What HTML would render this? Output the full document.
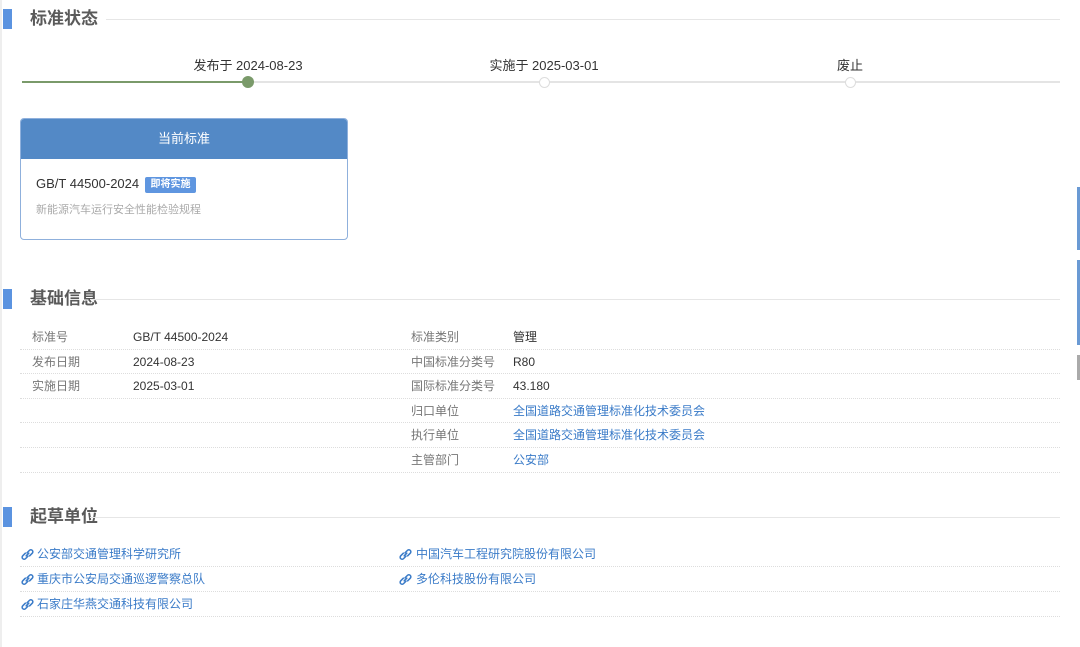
<!DOCTYPE html>
<html><head><meta charset="utf-8"><style>
*{margin:0;padding:0;box-sizing:border-box}
body{width:1080px;height:647px;background:#fff;position:relative;overflow:hidden;font-family:"Liberation Sans","Noto Sans CJK SC",sans-serif;color:#333}
.a{position:absolute;white-space:nowrap}
.bar{position:absolute;left:3px;width:9px;height:20px;background:#5b93e0}
.ttl{position:absolute;left:30px;font-size:17px;font-weight:bold;color:#5a5a5a;line-height:20px}
.hl{position:absolute;height:1px;background:#e6e6e6;right:20px}
.row{position:absolute;left:20px;width:1040px;height:24.6px;border-bottom:1px dotted #ddd;font-size:12px;line-height:24px}
.row span{position:absolute;top:0}
.lb{color:#777}
.lk{color:#3a7bc8}
.dr{position:absolute;left:20px;width:1040px;height:25px;border-bottom:1px dotted #ddd;font-size:12px;line-height:25px;color:#3a7bc8}
.dr span{position:absolute;top:0}
svg.ic{position:absolute;top:6px;width:13px;height:13px}
</style></head><body>
<div class="a" style="left:0;top:0;width:2px;height:647px;background:#eee"></div>
<div class="a" style="left:1077px;top:187px;width:3px;height:63px;background:#6a9ad4"></div>
<div class="a" style="left:1077px;top:260px;width:3px;height:85px;background:#6a9ad4"></div>
<div class="a" style="left:1077px;top:355px;width:3px;height:25px;background:#aaa"></div>

<div class="bar" style="top:9px"></div>
<div class="ttl" style="top:9px">标准状态</div>
<div class="hl" style="left:106px;top:19px"></div>

<div class="a" style="left:22px;top:81px;width:1038px;height:2px;background:#e4e4e4"></div>
<div class="a" style="left:22px;top:81px;width:226px;height:2px;background:#7a9a6a"></div>
<div class="a" style="left:242px;top:76px;width:12px;height:12px;border-radius:50%;background:#7a9a6a"></div>
<div class="a" style="left:539px;top:77px;width:11px;height:11px;border-radius:50%;background:#fff;border:1.5px solid #ddd"></div>
<div class="a" style="left:845px;top:77px;width:11px;height:11px;border-radius:50%;background:#fff;border:1.5px solid #ddd"></div>
<div class="a" style="left:248px;top:55px;transform:translateX(-50%);font-size:13px;color:#333">发布于 2024-08-23</div>
<div class="a" style="left:544px;top:55px;transform:translateX(-50%);font-size:13px;color:#333">实施于 2025-03-01</div>
<div class="a" style="left:850px;top:55px;transform:translateX(-50%);font-size:13px;color:#333">废止</div>

<div class="a" style="left:20px;top:118px;width:328px;height:122px;border:1px solid #8fb0dc;border-radius:4px;overflow:hidden">
<div style="height:40px;background:#5389c6;color:#fff;font-size:13px;text-align:center;line-height:40px">当前标准</div>
<div class="a" style="left:15px;top:57px;font-size:13px;color:#333">GB/T 44500-2024</div>
<div class="a" style="left:124px;top:58px;width:51px;height:16px;background:#5f96e0;border-radius:2px;color:#fff;font-size:10px;font-weight:bold;text-align:center;line-height:16px">即将实施</div>
<div class="a" style="left:15px;top:82px;font-size:11px;color:#aaa">新能源汽车运行安全性能检验规程</div>
</div>

<div class="bar" style="top:289px"></div>
<div class="ttl" style="top:289px">基础信息</div>
<div class="hl" style="left:90px;top:299px"></div>

<div class="row" style="top:325px"><span class="lb" style="left:12px">标准号</span><span style="left:113px">GB/T 44500-2024</span><span class="lb" style="left:391px">标准类别</span><span style="left:493px">管理</span></div>
<div class="row" style="top:349.6px"><span class="lb" style="left:12px">发布日期</span><span style="left:113px">2024-08-23</span><span class="lb" style="left:391px">中国标准分类号</span><span style="left:493px">R80</span></div>
<div class="row" style="top:374.2px"><span class="lb" style="left:12px">实施日期</span><span style="left:113px">2025-03-01</span><span class="lb" style="left:391px">国际标准分类号</span><span style="left:493px">43.180</span></div>
<div class="row" style="top:398.8px"><span class="lb" style="left:391px">归口单位</span><span class="lk" style="left:493px">全国道路交通管理标准化技术委员会</span></div>
<div class="row" style="top:423.4px"><span class="lb" style="left:391px">执行单位</span><span class="lk" style="left:493px">全国道路交通管理标准化技术委员会</span></div>
<div class="row" style="top:448px"><span class="lb" style="left:391px">主管部门</span><span class="lk" style="left:493px">公安部</span></div>

<div class="bar" style="top:507px"></div>
<div class="ttl" style="top:507px">起草单位</div>
<div class="hl" style="left:90px;top:517px"></div>

<svg width="0" height="0" style="position:absolute"><defs><symbol id="lk" viewBox="0 0 12 12"><g fill="none" stroke="#3a7bc8" stroke-width="1.4" stroke-linecap="round"><path d="M5.5 4.5 L7.8 2.2 a1.8 1.8 0 0 1 2.6 2.6 L8 7.2"/><path d="M6.5 7.5 L4.2 9.8 a1.8 1.8 0 0 1 -2.6 -2.6 L4 4.8"/><path d="M4.8 7.2 L7.2 4.8"/></g></symbol></defs></svg>

<div class="dr" style="top:542px"><svg class="ic" style="left:1px"><use href="#lk"/></svg><span style="left:17px">公安部交通管理科学研究所</span><svg class="ic" style="left:379px"><use href="#lk"/></svg><span style="left:396px">中国汽车工程研究院股份有限公司</span></div>
<div class="dr" style="top:567px"><svg class="ic" style="left:1px"><use href="#lk"/></svg><span style="left:17px">重庆市公安局交通巡逻警察总队</span><svg class="ic" style="left:379px"><use href="#lk"/></svg><span style="left:396px">多伦科技股份有限公司</span></div>
<div class="dr" style="top:592px"><svg class="ic" style="left:1px"><use href="#lk"/></svg><span style="left:17px">石家庄华燕交通科技有限公司</span></div>
</body></html>
